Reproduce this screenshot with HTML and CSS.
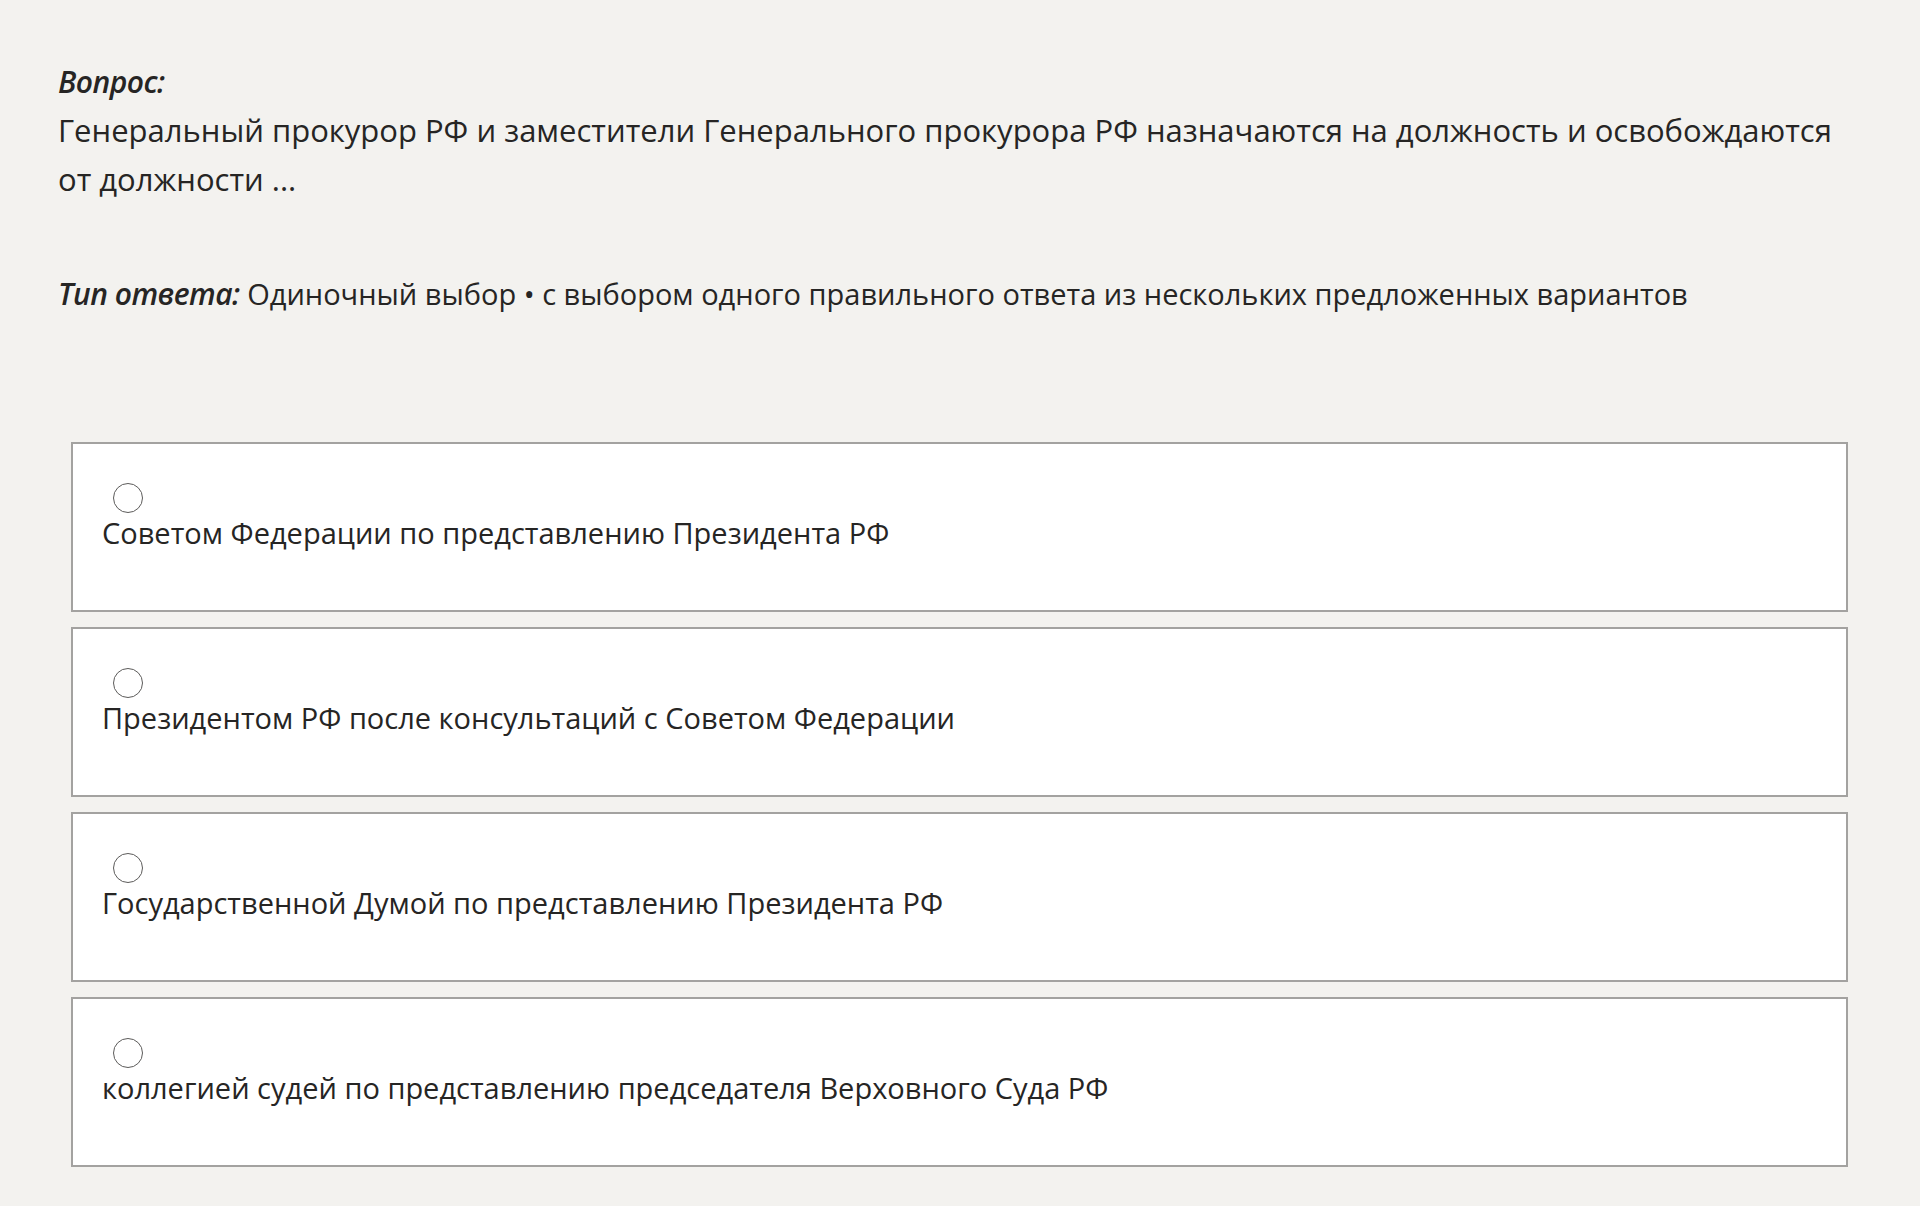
FILE: index.html
```html
<!DOCTYPE html>
<html lang="ru">

<head>
    <meta charset="UTF-8">
    <meta name="viewport" content="width=device-width, initial-scale=1.0">
    <title>Вопрос</title>
    <link rel="stylesheet" href="styles.css">
</head>

<body>
    <div class="question">
        <div class="label">Вопрос:</div>
        <div class="questionText">Генеральный прокурор РФ и заместители Генерального прокурора РФ назначаются на должность и освобождаются от должности ...</div>
        <div class="answerType"><span class="label">Тип ответа:</span> Одиночный выбор • с выбором одного правильного ответа из нескольких предложенных вариантов</div>
    </div>
    <div class="options">
        <div class="option">
            <span class="radio"></span>
            <div class="optionText">Советом Федерации по представлению Президента РФ</div>
        </div>
        <div class="option">
            <span class="radio"></span>
            <div class="optionText">Президентом РФ после консультаций с Советом Федерации</div>
        </div>
        <div class="option">
            <span class="radio"></span>
            <div class="optionText">Государственной Думой по представлению Президента РФ</div>
        </div>
        <div class="option">
            <span class="radio"></span>
            <div class="optionText">коллегией судей по представлению председателя Верховного Суда РФ</div>
        </div>
    </div>
</body>

</html>
```

FILE: styles.css
```css
body {
    margin: 0;
    padding: 0;
    background-color: #f3f2ef;
    color: #262524;
    font-family: 'Open Sans', 'Noto Sans', sans-serif;
    font-size: 29px;
    line-height: 49px;
}

.question {
    padding: 57px 58px 0 58px;
}

.label {
    font-size: 30px;
    font-weight: 600;
    font-style: italic;
    letter-spacing: -0.5px;
}

.questionText {
    max-width: 1800px;
    font-size: 31px;
}

.answerType {
    margin-top: 65px;
}

.options {
    margin: 124px 72px 40px 71px;
    display: flex;
    flex-direction: column;
    gap: 15px;
}

.option {
    background-color: #ffffff;
    border: 2px solid #a3a2a0;
    padding: 39px 30px 57px 29px;
}

.radio {
    display: block;
    width: 28px;
    height: 28px;
    margin-left: 11px;
    border: 1.5px solid #5c5b5a;
    border-radius: 50%;
}

.optionText {
    line-height: 40px;
}
```
